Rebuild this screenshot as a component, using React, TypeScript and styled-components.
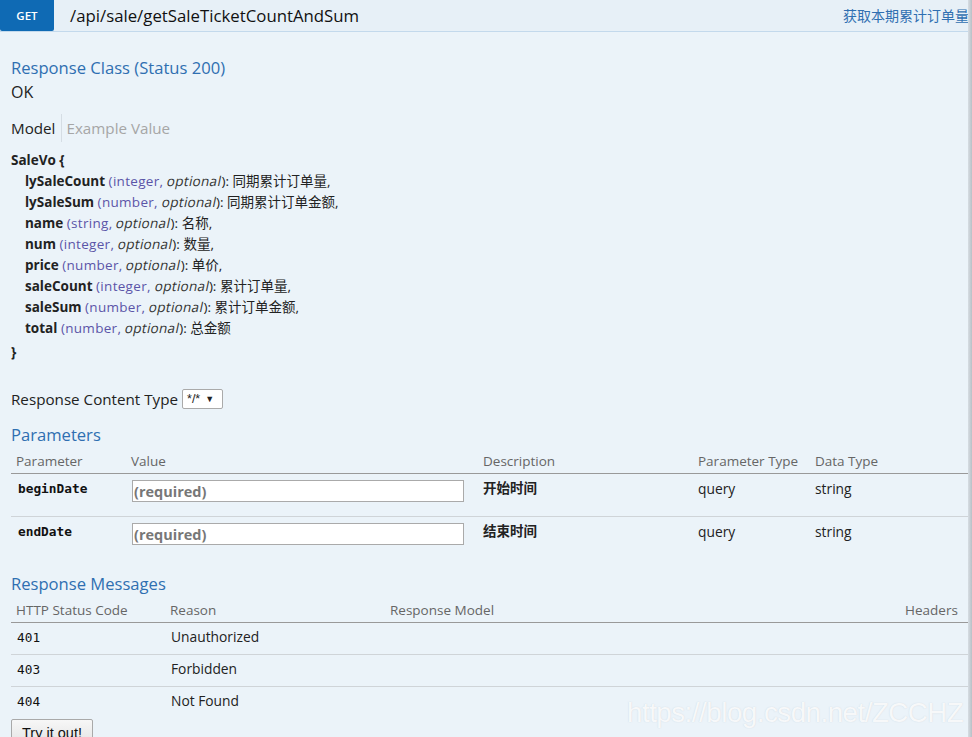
import React from "react";
import styled, { createGlobalStyle } from "styled-components";

const GlobalStyle = createGlobalStyle`
  html, body { margin: 0; padding: 0; }
  body {
    background: #ebf3f9;
    font-family: "Open Sans", "Noto Sans CJK SC", sans-serif;
    color: #222;
    overflow: hidden;
  }
`;

const CJK = `"Open Sans", "Noto Sans CJK SC", sans-serif`;
const MONO = `"DejaVu Sans Mono", "Liberation Mono", monospace`;
const BLUE = "#2f6fb1";

const Page = styled.div`
  display: flex;
  width: 972px;
  height: 737px;
  position: relative;
  overflow: hidden;
`;

const Main = styled.div`
  flex: 1;
  min-width: 0;
  background: #ebf3f9;
`;

const EdgeShade = styled.div`
  width: 4px;
  background: linear-gradient(to right, #d6dde3, #b9c0c6);
`;

const Heading = styled.div`
  display: flex;
  align-items: stretch;
  height: 31px;
  background: #e7f0f7;
  border-bottom: 1px solid #c3d9ec;
`;

const Method = styled.div`
  width: 54px;
  background: #0f6ab4;
  color: #fff;
  font-family: "Open Sans", sans-serif;
  font-size: 11.5px;
  font-weight: 600;
  display: flex;
  align-items: center;
  justify-content: center;
  border-radius: 0 0 2px 2px;
`;

const Path = styled.div`
  margin-left: 16px;
  font-size: 16.8px;
  color: #111;
  display: flex;
  align-items: center;
  flex: 1;
  padding-bottom: 1px;
`;

const Summary = styled.div`
  font-family: ${CJK};
  font-size: 14px;
  color: ${BLUE};
  display: flex;
  align-items: center;
  white-space: nowrap;
  margin-right: -1px;
  padding-bottom: 1px;
`;

const Content = styled.div`
  padding: 26px 0 0 11px;
`;

const SectionTitle = styled.h4<{ $top?: number }>`
  margin: ${(p) => p.$top ?? 0}px 0 0 0;
  font-size: 16.6px;
  font-weight: 400;
  line-height: 20px;
  color: ${BLUE};
`;

const Plain = styled.div<{ $top?: number; $size?: number }>`
  margin-top: ${(p) => p.$top ?? 0}px;
  font-size: ${(p) => p.$size ?? 16}px;
  line-height: 20px;
  color: #222;
  display: flex;
  align-items: center;
`;

const Tabs = styled.div`
  display: flex;
  align-items: center;
  margin-top: 12px;
  height: 28px;
`;

const Tab = styled.span<{ $active?: boolean }>`
  font-size: 15.2px;
  color: ${(p) => (p.$active ? "#222" : "#a6a6a6")};
  padding-right: ${(p) => (p.$active ? "6px" : "0")};
  padding-left: ${(p) => (p.$active ? "0" : "4px")};
  border-left: ${(p) => (p.$active ? "none" : "1px solid #d5dde4")};
  height: 28px;
  display: flex;
  align-items: center;
`;

const Signature = styled.div`
  margin-top: 8px;
  font-family: ${CJK};
  font-size: 13.5px;
  line-height: 21px;
  color: #222;
`;

const Strong = styled.div<{ $top?: number }>`
  font-weight: 700;
  margin-top: ${(p) => p.$top ?? 0}px;
`;

const Prop = styled.div`
  padding-left: 14px;
  white-space: nowrap;
`;

const PropName = styled.span`
  font-weight: 700;
`;

const PropType = styled.span`
  color: #5b55a8;
  letter-spacing: 0.3px;
`;

const PropOpt = styled.span`
  display: inline-block;
  transform: skewX(-12deg);
  color: #333;
  letter-spacing: 0.3px;
`;

const Select = styled.div`
  margin-left: 4px;
  height: 18px;
  width: 35px;
  border: 1px solid #aaa;
  background: #fff;
  border-radius: 2px;
  font-family: "Liberation Sans", Arial, sans-serif;
  font-size: 12.5px;
  display: flex;
  align-items: center;
  padding-left: 4px;
  gap: 5px;
`;

const Caret = styled.span`
  font-size: 9px;
`;

const Grid = styled.div<{ $cols: string }>`
  display: grid;
  grid-template-columns: ${(p) => p.$cols};
  margin-top: 4px;
`;

const HeadCell = styled.div<{ $pl?: number }>`
  font-size: 13.5px;
  color: #666;
  height: 24px;
  display: flex;
  align-items: center;
  padding-left: ${(p) => p.$pl ?? 5}px;
  border-bottom: 1px solid #999;
  white-space: nowrap;
`;

const Cell = styled.div<{ $h: number; $pt: number; $last?: boolean; $pl?: number }>`
  height: ${(p) => p.$h}px;
  box-sizing: border-box;
  padding-top: ${(p) => p.$pt}px;
  padding-left: ${(p) => p.$pl ?? 5}px;
  border-bottom: ${(p) => (p.$last ? "none" : "1px solid #cfd4d8")};
  font-size: 13.8px;
  line-height: 18px;
  color: #222;
  white-space: nowrap;
`;

const Code = styled.span`
  font-family: ${MONO};
  font-size: 12.8px;
  font-weight: 700;
  color: #111;
`;

const CodePlain = styled.span`
  font-family: ${MONO};
  font-size: 12.8px;
  color: #111;
`;

const Desc = styled.span`
  font-family: ${CJK};
  font-size: 13.5px;
  font-weight: 700;
`;

const Input = styled.input`
  width: 332px;
  height: 22px;
  box-sizing: border-box;
  border: 1px solid #aaa;
  background: #fff;
  padding: 0 1px;
  margin: 1px 0 0 1px;
  font-family: "Open Sans", sans-serif;
  font-size: 14.5px;
  font-weight: 700;
  outline: none;
  &::placeholder {
    color: #777;
  }
`;

const Button = styled.button`
  width: 82px;
  height: 26px;
  border: 1px solid #a9a9a9;
  border-radius: 2px;
  background: linear-gradient(#f7f7f7, #e4e4e4);
  font-family: "Liberation Sans", Arial, sans-serif;
  font-size: 14.5px;
  color: #111;
  padding: 5px 0 0 0;
  display: flex;
  justify-content: center;
  align-items: flex-start;
`;

const Watermark = styled.div`
  position: absolute;
  left: 627px;
  top: 697px;
  font-family: "Liberation Sans", Arial, sans-serif;
  font-size: 27.5px;
  letter-spacing: -0.4px;
  color: rgba(255, 255, 255, 0.85);
  text-shadow: 0 0 1px rgba(170, 180, 190, 0.5);
  white-space: nowrap;
  pointer-events: none;
`;

const props = [
  ["lySaleCount", "integer", "同期累计订单量,"],
  ["lySaleSum", "number", "同期累计订单金额,"],
  ["name", "string", "名称,"],
  ["num", "integer", "数量,"],
  ["price", "number", "单价,"],
  ["saleCount", "integer", "累计订单量,"],
  ["saleSum", "number", "累计订单金额,"],
  ["total", "number", "总金额"],
];

const params = [
  ["beginDate", "开始时间"],
  ["endDate", "结束时间"],
];

const messages = [
  ["401", "Unauthorized"],
  ["403", "Forbidden"],
  ["404", "Not Found"],
];

export default function App() {
  return (
    <>
      <GlobalStyle />
      <Page>
        <Main>
          <Heading>
            <Method>GET</Method>
            <Path>/api/sale/getSaleTicketCountAndSum</Path>
            <Summary>获取本期累计订单量</Summary>
          </Heading>
          <Content>
            <SectionTitle>Response Class (Status 200)</SectionTitle>
            <Plain $top={4}>OK</Plain>
            <Tabs>
              <Tab $active>Model</Tab>
              <Tab>Example Value</Tab>
            </Tabs>
            <Signature>
              <Strong>SaleVo {"{"}</Strong>
              {props.map(([n, t, d]) => (
                <Prop key={n}>
                  <PropName>{n}</PropName> <PropType>({t}, </PropType>
                  <PropOpt>optional</PropOpt>): {d}
                </Prop>
              ))}
              <Strong $top={3}>{"}"}</Strong>
            </Signature>
            <Plain $top={26} $size={15.2}>
              Response Content Type
              <Select>
                */* <Caret>▼</Caret>
              </Select>
            </Plain>
            <SectionTitle $top={16}>Parameters</SectionTitle>
            <Grid $cols="115px 352px 215px 117px 1fr">
              <HeadCell>Parameter</HeadCell>
              <HeadCell>Value</HeadCell>
              <HeadCell>Description</HeadCell>
              <HeadCell>Parameter Type</HeadCell>
              <HeadCell>Data Type</HeadCell>
              {params.map(([n, d], i) => {
                const last = i === params.length - 1;
                return (
                  <React.Fragment key={n}>
                    <Cell $h={43} $pl={7} $pt={5} $last={last}><Code>{n}</Code></Cell>
                    <Cell $h={43} $pt={5} $last={last}><Input placeholder="(required)" /></Cell>
                    <Cell $h={43} $pt={5} $last={last}><Desc>{d}</Desc></Cell>
                    <Cell $h={43} $pt={6} $last={last}>query</Cell>
                    <Cell $h={43} $pt={6} $last={last}>string</Cell>
                  </React.Fragment>
                );
              })}
            </Grid>
            <SectionTitle $top={14}>Response Messages</SectionTitle>
            <Grid $cols="154px 220px 515px 1fr">
              <HeadCell>HTTP Status Code</HeadCell>
              <HeadCell>Reason</HeadCell>
              <HeadCell>Response Model</HeadCell>
              <HeadCell>Headers</HeadCell>
              {messages.map(([c, r], i) => {
                const last = i === messages.length - 1;
                return (
                  <React.Fragment key={c}>
                    <Cell $h={32} $pt={5} $pl={6} $last={last}><CodePlain>{c}</CodePlain></Cell>
                    <Cell $h={32} $pt={5} $pl={6} $last={last}>{r}</Cell>
                    <Cell $h={32} $pt={5} $last={last}></Cell>
                    <Cell $h={32} $pt={5} $last={last}></Cell>
                  </React.Fragment>
                );
              })}
            </Grid>
            <Button>Try it out!</Button>
          </Content>
        </Main>
        <EdgeShade />
        <Watermark>https://blog.csdn.net/ZCCHZ</Watermark>
      </Page>
    </>
  );
}
